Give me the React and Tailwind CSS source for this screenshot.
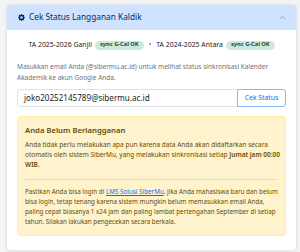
import { ChevronUp } from 'lucide-react';

const Badge = ({ children }) => (
  <span className="inline-flex items-center h-[9px] px-[5px] rounded-full bg-[#d1e7dd] text-[#0f5132] text-[5.7px] font-bold leading-none">
    {children}
  </span>
);

const GearIcon = () => (
  <svg viewBox="0 0 16 16" className="w-[7px] h-[7px] text-[#052c65]" fill="currentColor">
    <path d="M9.4 1.1c-.4-1.4-2.4-1.4-2.8 0l-.1.3a1.5 1.5 0 0 1-2.1.9l-.3-.2c-1.3-.7-2.7.7-2 2l.2.3a1.5 1.5 0 0 1-.9 2.1l-.3.1c-1.4.4-1.4 2.4 0 2.8l.3.1a1.5 1.5 0 0 1 .9 2.1l-.2.3c-.7 1.3.7 2.7 2 2l.3-.2a1.5 1.5 0 0 1 2.1.9l.1.3c.4 1.4 2.4 1.4 2.8 0l.1-.3a1.5 1.5 0 0 1 2.1-.9l.3.2c1.3.7 2.7-.7 2-2l-.2-.3a1.5 1.5 0 0 1 .9-2.1l.3-.1c1.4-.4 1.4-2.4 0-2.8l-.3-.1a1.5 1.5 0 0 1-.9-2.1l.2-.3c.7-1.3-.7-2.7-2-2l-.3.2a1.5 1.5 0 0 1-2.1-.9zM8 10.9a2.9 2.9 0 1 1 0-5.8 2.9 2.9 0 0 1 0 5.8" />
  </svg>
);

export default function App() {
  return (
    <div className="min-h-[252px] bg-[#f3f4f6] pt-[4px] pl-[6px] font-['Noto_Sans',sans-serif]">
      <div className="w-[291px] bg-white rounded-[4px] border border-[#e5e7eb] shadow-[0_1px_3px_rgba(0,0,0,0.08)] overflow-hidden">
        <div className="h-[25px] bg-[#cfe2ff] flex items-center justify-between pl-[11px] pr-[9px] border-b border-[#dee2e6]">
          <div className="flex items-center gap-[4px]">
            <GearIcon />
            <span className="text-[8.3px] text-[#052c65]">Cek Status Langganan Kaldik</span>
          </div>
          <ChevronUp className="w-[9px] h-[9px] text-[#5a6a85]" strokeWidth={1.4} />
        </div>

        <div className="px-[10px] pt-[10px] pb-[14px]">
          <div className="flex items-center justify-center gap-[3px] text-[6.9px] text-[#212529]">
            <span>TA 2025-2026 Ganjil</span>
            <Badge>sync G-Cal OK</Badge>
            <span className="mx-[2px] text-[#6c757d]">•</span>
            <span>TA 2024-2025 Antara</span>
            <Badge>sync G-Cal OK</Badge>
          </div>

          <p className="mt-[11px] pr-[12px] text-[6.5px] leading-[11px] text-[#6c757d]">
            Masukkan email Anda (@sibermu.ac.id) untuk melihat status sinkronisasi Kalender Akademik ke akun Google Anda.
          </p>

          <div className="mt-[6px] flex h-[18px]">
            <div className="flex-1 flex items-center px-[6px] border border-[#dee2e6] rounded-l-[3px] text-[8.1px] text-[#212529]">
              joko20252145789@sibermu.ac.id
            </div>
            <button className="w-[49px] -ml-px border border-[#86b7fe] rounded-r-[3px] text-[6.8px] text-[#0d6efd] bg-white">
              Cek Status
            </button>
          </div>

          <div className="mt-[9px] bg-[#fff3cd] border border-[#ffecb5] rounded-[3px] pl-[7px] pr-[3px] pt-[8px] pb-[8px] text-[#664d03]">
            <div className="text-[7.7px] font-semibold leading-[10px]">Anda Belum Berlangganan</div>
            <p className="mt-[5px] pr-[1px] text-[6.5px] leading-[10px]">
              Anda tidak perlu melakukan apa pun karena data Anda akan didaftarkan secara otomatis oleh sistem SiberMu, yang melakukan sinkronisasi setiap <span className="font-semibold">Jumat jam 00:00 WIB</span>.
            </p>
            <hr className="mt-[9px] mb-[7px] mr-[5px] border-t border-[#e6d9b0]" />
            <p className="text-[6.3px] leading-[10px]">
              Pastikan Anda bisa login di <a className="text-[#0d6efd] underline">LMS Solusi SiberMu</a>. Jika Anda mahasiswa baru dan belum bisa login, tetap tenang karena sistem mungkin belum memasukkan email Anda, paling cepat biasanya 1 x24 jam dan paling lambat pertengahan September di setiap tahun. Silakan lakukan pengecekan secara berkala.
            </p>
          </div>
        </div>
      </div>
    </div>
  );
}
